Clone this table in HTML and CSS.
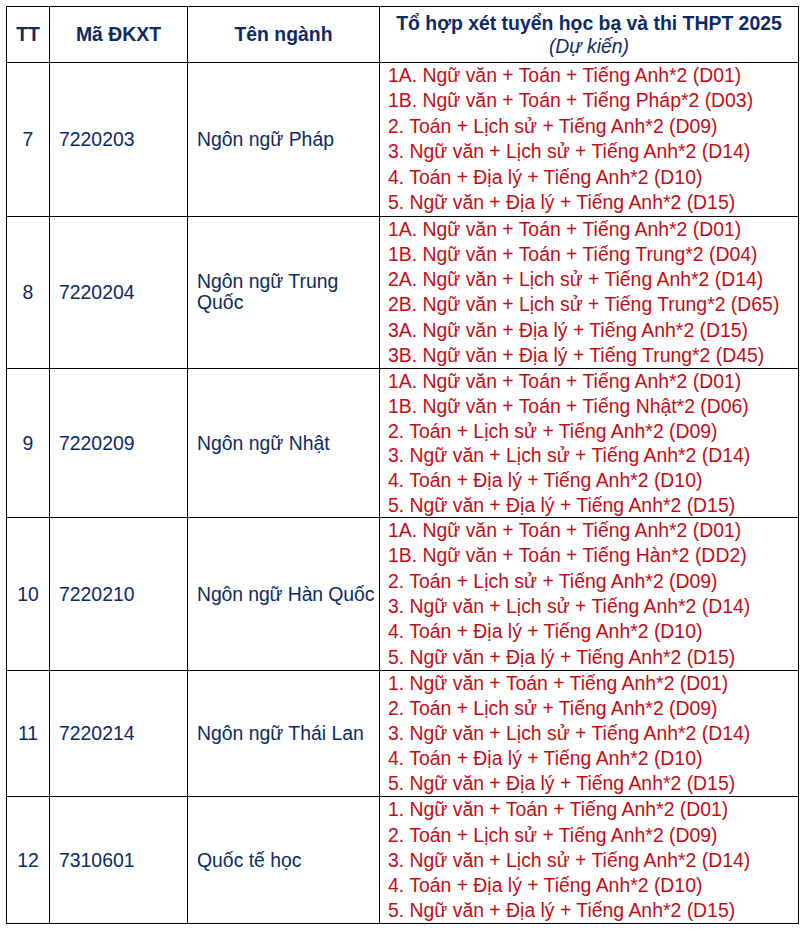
FILE: index.html
```html
<!DOCTYPE html>
<html lang="vi">
<head>
<meta charset="utf-8">
<link rel="stylesheet" href="styles.css">
</head>
<body>
<table class="tbl">
  <colgroup>
    <col class="c-tt"><col class="c-ma"><col class="c-ten"><col class="c-to">
  </colgroup>
  <thead>
    <tr class="head">
      <th>TT</th>
      <th>Mã ĐKXT</th>
      <th>Tên ngành</th>
      <th><div class="h1">Tổ hợp xét tuyển học bạ và thi THPT 2025</div><div class="h2">(Dự kiến)</div></th>
    </tr>
  </thead>
  <tbody>
    <tr class="r7">
      <td class="tt">7</td><td class="ma">7220203</td><td class="ten">Ngôn ngữ Pháp</td>
      <td class="to">
        <div>1A. Ngữ văn + Toán + Tiếng Anh*2 (D01)</div>
        <div>1B. Ngữ văn + Toán + Tiếng Pháp*2 (D03)</div>
        <div>2. Toán + Lịch sử + Tiếng Anh*2 (D09)</div>
        <div>3. Ngữ văn + Lịch sử + Tiếng Anh*2 (D14)</div>
        <div>4. Toán + Địa lý + Tiếng Anh*2 (D10)</div>
        <div>5. Ngữ văn + Địa lý + Tiếng Anh*2 (D15)</div>
      </td>
    </tr>
    <tr class="r8">
      <td class="tt">8</td><td class="ma">7220204</td><td class="ten">Ngôn ngữ Trung Quốc</td>
      <td class="to">
        <div>1A. Ngữ văn + Toán + Tiếng Anh*2 (D01)</div>
        <div>1B. Ngữ văn + Toán + Tiếng Trung*2 (D04)</div>
        <div>2A. Ngữ văn + Lịch sử + Tiếng Anh*2 (D14)</div>
        <div>2B. Ngữ văn + Lịch sử + Tiếng Trung*2 (D65)</div>
        <div>3A. Ngữ văn + Địa lý + Tiếng Anh*2 (D15)</div>
        <div>3B. Ngữ văn + Địa lý + Tiếng Trung*2 (D45)</div>
      </td>
    </tr>
    <tr class="r9">
      <td class="tt">9</td><td class="ma">7220209</td><td class="ten">Ngôn ngữ Nhật</td>
      <td class="to">
        <div>1A. Ngữ văn + Toán + Tiếng Anh*2 (D01)</div>
        <div>1B. Ngữ văn + Toán + Tiếng Nhật*2 (D06)</div>
        <div>2. Toán + Lịch sử + Tiếng Anh*2 (D09)</div>
        <div>3. Ngữ văn + Lịch sử + Tiếng Anh*2 (D14)</div>
        <div>4. Toán + Địa lý + Tiếng Anh*2 (D10)</div>
        <div>5. Ngữ văn + Địa lý + Tiếng Anh*2 (D15)</div>
      </td>
    </tr>
    <tr class="r10">
      <td class="tt">10</td><td class="ma">7220210</td><td class="ten nowrap">Ngôn ngữ Hàn Quốc</td>
      <td class="to">
        <div>1A. Ngữ văn + Toán + Tiếng Anh*2 (D01)</div>
        <div>1B. Ngữ văn + Toán + Tiếng Hàn*2 (DD2)</div>
        <div>2. Toán + Lịch sử + Tiếng Anh*2 (D09)</div>
        <div>3. Ngữ văn + Lịch sử + Tiếng Anh*2 (D14)</div>
        <div>4. Toán + Địa lý + Tiếng Anh*2 (D10)</div>
        <div>5. Ngữ văn + Địa lý + Tiếng Anh*2 (D15)</div>
      </td>
    </tr>
    <tr>
      <td class="tt">11</td><td class="ma">7220214</td><td class="ten">Ngôn ngữ Thái Lan</td>
      <td class="to">
        <div>1. Ngữ văn + Toán + Tiếng Anh*2 (D01)</div>
        <div>2. Toán + Lịch sử + Tiếng Anh*2 (D09)</div>
        <div>3. Ngữ văn + Lịch sử + Tiếng Anh*2 (D14)</div>
        <div>4. Toán + Địa lý + Tiếng Anh*2 (D10)</div>
        <div>5. Ngữ văn + Địa lý + Tiếng Anh*2 (D15)</div>
      </td>
    </tr>
    <tr>
      <td class="tt">12</td><td class="ma">7310601</td><td class="ten">Quốc tế học</td>
      <td class="to">
        <div>1. Ngữ văn + Toán + Tiếng Anh*2 (D01)</div>
        <div>2. Toán + Lịch sử + Tiếng Anh*2 (D09)</div>
        <div>3. Ngữ văn + Lịch sử + Tiếng Anh*2 (D14)</div>
        <div>4. Toán + Địa lý + Tiếng Anh*2 (D10)</div>
        <div>5. Ngữ văn + Địa lý + Tiếng Anh*2 (D15)</div>
      </td>
    </tr>
  </tbody>
</table>
</body>
</html>
```
FILE: styles.css
```css
html, body {
  margin: 0;
  padding: 0;
  background: #fff;
}
body {
  padding: 6px 0 0 6px;
  font-family: "Liberation Sans", Arial, sans-serif;
  font-size: 19.4px;
  color: #0b2a66;
}
.tbl {
  border-collapse: collapse;
  table-layout: fixed;
  width: 792px;
}
.c-tt { width: 43px; }
.c-ma { width: 138px; }
.c-ten { width: 192px; }
.c-to { width: 419px; }
.tbl th, .tbl td {
  border: 1.5px solid #000;
  padding: 0;
  vertical-align: middle;
}
.head th {
  height: 55px;
  text-align: center;
  font-weight: bold;
  color: #0b2a66;
  line-height: 23px;
}
.h2 {
  font-weight: normal;
  font-style: italic;
}
.tt {
  text-align: center;
}
.ma {
  padding-left: 9px !important;
}
.ten {
  padding-left: 9px !important;
  padding-right: 4px !important;
  line-height: 21px;
}
.nowrap {
  white-space: nowrap;
  padding-right: 0 !important;
  letter-spacing: -0.1px;
}
.to {
  padding-left: 8px !important;
  color: #c40c14;
  line-height: 25.1px;
  white-space: nowrap;
}
.r7 .to { line-height: 25.45px; }
.r8 .to { line-height: 25.25px; }
.r9 .to { line-height: 24.65px; }
.r10 .to { line-height: 25.3px; }
```
